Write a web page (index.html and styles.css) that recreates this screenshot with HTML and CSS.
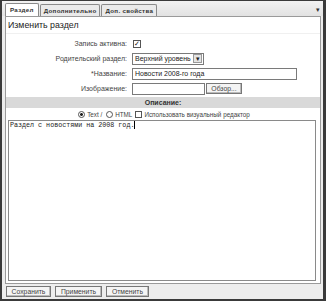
FILE: index.html
```html
<!DOCTYPE html>
<html>
<head>
	<link rel="stylesheet" href="styles.css">
</head>
<body>

	<div class="window">
		<!-- tabs -->
		<div class="tabs">
			<span class="tab active">Раздел</span>
			<span class="tab">Дополнительно</span>
			<span class="tab">Доп. свойства</span>
			<span class="tabs-menu">&#9662;</span>
		</div>

		<div class="panel">
			<div class="title">Изменить раздел</div>

			<div class="row first">
				<span class="label">Запись активна:</span>
				<span class="check checked">&#10003;</span>
			</div>
			<div class="row">
				<span class="label">Родительский раздел:</span>
				<span class="select">Верхний уровень<span class="select-arrow">&#9662;</span></span>
			</div>
			<div class="row">
				<span class="label">*Название:</span>
				<span class="input wide">Новости 2008-го года</span>
			</div>
			<div class="row">
				<span class="label">Изображение:</span>
				<span class="input short"></span>
				<span class="btn browse">Обзор...</span>
			</div>

			<div class="band">Описание:</div>

			<div class="modes">
				<span class="radio on"></span><span>Text /</span>
				<span class="radio"></span><span>HTML</span>
				<span class="check"></span><span>Использовать визуальный редактор</span>
			</div>

			<div class="editor">Раздел с новостями на 2008 год.<span class="caret"></span></div>
		</div>

		<div class="buttons">
			<span class="btn">Сохранить</span>
			<span class="btn">Применить</span>
			<span class="btn">Отменить</span>
		</div>
	</div>

</body>
</html>
```
FILE: styles.css
```css
*, html, body{
	margin: 0;
	padding: 0;
	box-sizing: border-box;
}
body{
	background: #fff;
	font-family: "Liberation Sans", Arial, sans-serif;
	font-size: 7px;
	color: #333;
}
.window{
	width: 326px;
	height: 301px;
	border: 2px solid #3a3a3a;
	border-top-width: 1px;
	border-right-width: 3px;
	background: #ececec;
	display: flex;
	flex-direction: column;
}
/* tab strip */
.tabs{
	height: 15px;
	flex: none;
	display: flex;
	align-items: flex-end;
	padding: 0 2px 0 3px;
	background: linear-gradient(#f2f2f2, #e2e2e2);
	position: relative;
}
.tab{
	height: 12px;
	line-height: 11px;
	padding: 0 3px;
	margin-right: 1px;
	border: 1px solid #8a8a8a;
	border-bottom: none;
	border-radius: 2px 2px 0 0;
	background: #eaeaea;
	font-size: 6.2px;
	font-weight: bold;
	color: #333;
	letter-spacing: 0.3px;
	white-space: nowrap;
}
.tab.active{
	background: #fff;
	height: 13px;
	line-height: 12px;
	padding: 0 4px;
}
.tabs-menu{
	position: absolute;
	right: 3px;
	top: 5px;
	font-size: 7px;
	color: #333;
}
.panel{
	flex: 1;
	background: #fff;
	border: 1px solid #9a9a9a;
	margin: 0 2px 0 3px;
	padding: 3px 0 2px 0;
	display: flex;
	flex-direction: column;
}
.title{
	font-size: 8.8px;
	color: #222;
	padding: 0 0 0 2px;
	height: 14px;
	line-height: 11px;
	border-bottom: 1px solid #f0f0f0;
}
.row{
	display: flex;
	align-items: center;
	height: 15px;
	white-space: nowrap;
}
.row.first{
	margin-top: 2px;
}
.label{
	width: 126px;
	text-align: right;
	padding-right: 5px;
	font-size: 7px;
	color: #444;
}
.check{
	display: inline-block;
	width: 8px;
	height: 8px;
	border: 1px solid #555;
	background: #fff;
	font-size: 7px;
	line-height: 6px;
	text-align: center;
	color: #111;
}
.row .check{
	margin-left: 1px;
}
.select{
	display: inline-flex;
	align-items: center;
	justify-content: space-between;
	width: 72px;
	height: 12px;
	border: 1px solid #7a7a7a;
	padding: 0 1px 0 2px;
	font-size: 7px;
	color: #222;
}
.select-arrow{
	width: 9px;
	height: 9px;
	border: 1px solid #999;
	background: #e4e4e4;
	font-size: 7px;
	line-height: 7px;
	text-align: center;
}
.input{
	display: inline-block;
	height: 12px;
	line-height: 10px;
	border: 1px solid #7a7a7a;
	padding: 0 2px;
	font-size: 7px;
	color: #222;
	background: #fff;
}
.input.wide{
	width: 165px;
}
.input.short{
	width: 73px;
}
.btn{
	display: inline-block;
	height: 11px;
	line-height: 9px;
	padding: 0 3px;
	border: 1px solid #777;
	box-shadow: inset -1px -1px 0 #bbb;
	background: #f4f4f4;
	font-size: 6.8px;
	color: #444;
	text-align: center;
	white-space: nowrap;
}
.browse{
	margin-left: 1px;
	width: 36px;
}
.band{
	margin-top: 1px;
	height: 11px;
	line-height: 11px;
	background: #d9d9d9;
	text-align: center;
	font-size: 7px;
	font-weight: bold;
	color: #333;
}
.modes{
	display: flex;
	align-items: center;
	justify-content: center;
	gap: 2px;
	height: 12px;
	font-size: 6.3px;
	color: #444;
	white-space: nowrap;
}
.radio{
	display: inline-block;
	width: 7px;
	height: 7px;
	border: 1px solid #555;
	border-radius: 50%;
	margin-left: 2px;
}
.radio.on{
	background: radial-gradient(#222 35%, #fff 45%);
}
.modes .check{
	margin-left: 1px;
	width: 7px;
	height: 7px;
}
.editor{
	flex: 1;
	margin: 0 4px 0 2px;
	border: 1px solid #8a8a8a;
	padding: 0 1px;
	line-height: 9px;
	font-family: "Liberation Mono", "Courier New", monospace;
	font-size: 6.7px;
	color: #222;
}
.caret{
	display: inline-block;
	width: 1px;
	height: 8px;
	background: #000;
	vertical-align: middle;
}
.buttons{
	height: 15px;
	flex: none;
	display: flex;
	align-items: center;
	gap: 4px;
	padding: 0 0 0 4px;
	background: #ededed;
}
.buttons .btn{
	width: 45px;
	padding: 0;
}
.buttons .btn:nth-child(2){
	width: 47px;
}
.buttons .btn:nth-child(3){
	width: 43px;
}
```
